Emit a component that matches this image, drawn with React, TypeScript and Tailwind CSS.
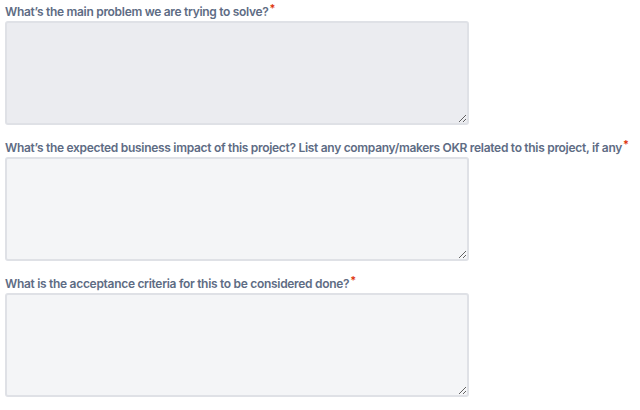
const fields = [
  { label: "What’s the main problem we are trying to solve?", hover: true },
  {
    label:
      "What’s the expected business impact of this project? List any company/makers OKR related to this project, if any",
    hover: false,
  },
  { label: "What is the acceptance criteria for this to be considered done?", hover: false },
];

export default function App() {
  return (
    <div
      className="w-[640px] h-[410px] bg-white pl-[5px] pt-[4px] flex flex-col gap-[15px] overflow-hidden"
      style={{ fontFamily: "Inter, 'Noto Sans', sans-serif" }}
    >
      {fields.map((f) => (
        <div key={f.label} className="flex flex-col">
          <label className="h-[16px] text-[12px] leading-[16px] font-semibold tracking-[-0.3px] text-[#5e6c84] whitespace-nowrap">
            {f.label}
            <span className="text-[#de350b] text-[11px] leading-none align-top relative -top-[1px] pl-[1px]">*</span>
          </label>
          <textarea
            className={`mt-[1px] w-[464px] h-[104px] rounded-[3px] border-2 border-[#dfe1e6] outline-none resize-y ${
              f.hover ? "bg-[#ebecf0]" : "bg-[#f4f5f7]"
            }`}
          />
        </div>
      ))}
    </div>
  );
}
